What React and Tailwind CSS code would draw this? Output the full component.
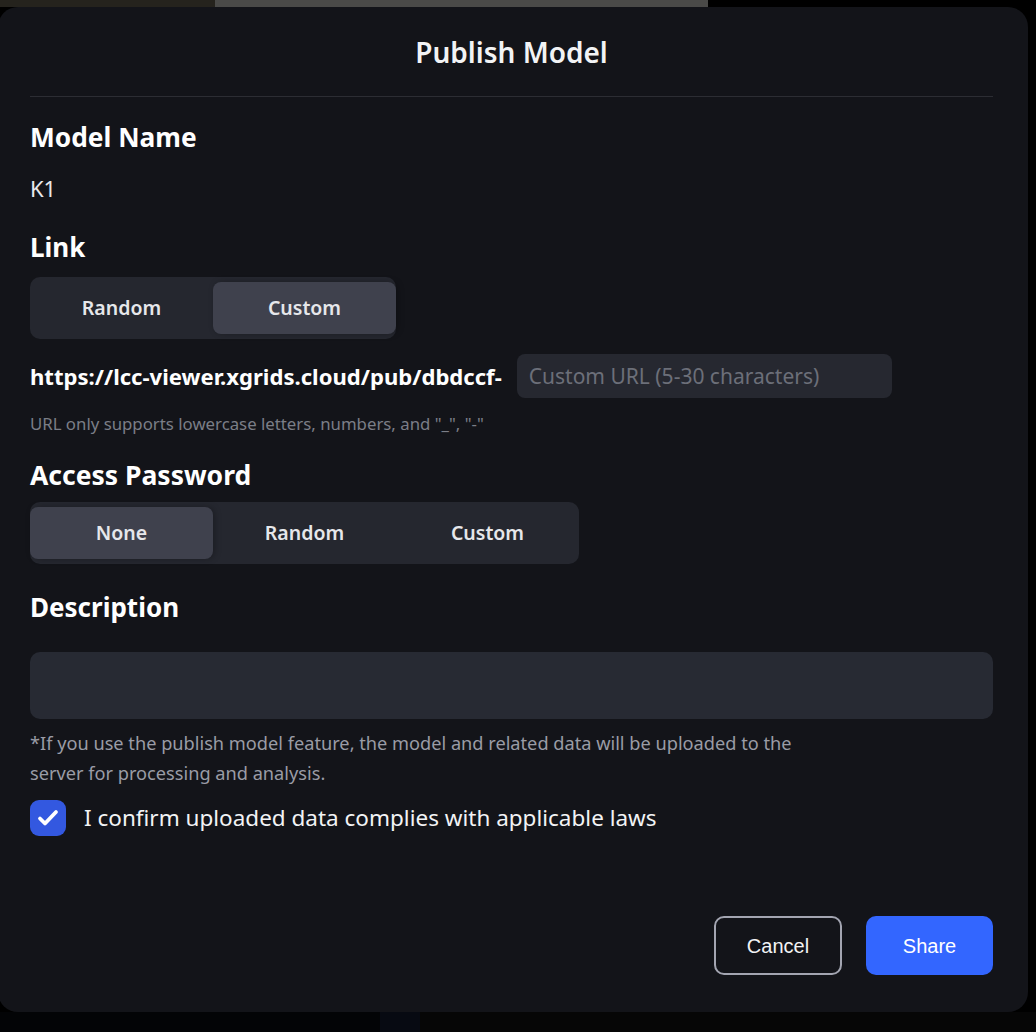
import { useState } from "react";

const font = { fontFamily: '"Noto Sans", "Open Sans", sans-serif' };

const Segmented = ({ options, value, onChange }) => (
  <div className="flex h-[62px] rounded-[10px] bg-[#25272f] py-[5px]">
    {options.map((opt) => (
      <button
        key={opt}
        onClick={() => onChange(opt)}
        className={`w-[183px] h-full rounded-[8px] text-[19.5px] font-semibold text-[#e6e7eb] ${
          value === opt ? "bg-[#3f414d] shadow-[2px_0_6px_rgba(0,0,0,0.25)]" : ""
        }`}
      >
        {opt}
      </button>
    ))}
  </div>
);

export default function App() {
  const [link, setLink] = useState("Custom");
  const [pwd, setPwd] = useState("None");
  const [agree, setAgree] = useState(true);

  return (
    <div className="w-[1036px] h-[1032px] bg-black overflow-hidden flex flex-col" style={font}>
      {/* backdrop strip */}
      <div className="h-[7px] flex shrink-0">
        <div className="w-[215px] bg-[#25231d]" />
        <div className="w-[493px] bg-[#4a4a48]" />
        <div className="flex-1 bg-black" />
      </div>

      <div className="w-[1030px] -ml-[2px] h-[1005px] bg-[#131419] rounded-[20px] pl-[32px] pr-[35px] flex flex-col">
        <h1 className="pt-[27px] h-[63px] text-center text-[28px] leading-[36px] font-semibold text-[#f2f3f5]">
          Publish Model
        </h1>
        <div className="mt-[26px] h-px bg-[#2c2d33]" />

        <h2 className="mt-[24px] text-[26.3px] leading-[32px] font-bold text-white">Model Name</h2>
        <p className="mt-[21px] text-[22px] leading-[28px] text-[#e8e9ec]">K1</p>

        <h2 className="mt-[29px] text-[26px] leading-[32px] font-bold text-white">Link</h2>
        <div className="mt-[14px] flex">
          <Segmented options={["Random", "Custom"]} value={link} onChange={setLink} />
        </div>

        <div className="mt-[15px] flex items-center gap-[15px]">
          <span className="text-[22.1px] leading-[28px] font-bold text-white">
            https://lcc-viewer.xgrids.cloud/pub/dbdccf-
          </span>
          <input
            placeholder="Custom URL (5-30 characters)"
            className="w-[375px] h-[44px] rounded-[8px] bg-[#262830] px-[12px] text-[21px] text-[#e8e9ec] placeholder:text-[#6c6f79] outline-none"
          />
        </div>
        <p className="mt-[16px] text-[16.8px] leading-[20px] text-[#7b7e87]">
          URL only supports lowercase letters, numbers, and "_", "-"
        </p>

        <h2 className="mt-[25px] text-[26.5px] leading-[32px] font-bold text-white">Access Password</h2>
        <div className="mt-[11px] flex">
          <Segmented options={["None", "Random", "Custom"]} value={pwd} onChange={setPwd} />
        </div>

        <h2 className="mt-[27px] text-[26px] leading-[32px] font-bold text-white">Description</h2>
        <textarea className="mt-[29px] h-[67px] w-full resize-none rounded-[10px] bg-[#272a33] px-3 py-2 text-[18px] text-white outline-none" />

        <p className="mt-[9px] text-[18.2px] leading-[30px] text-[#9a9ca6]">
          *If you use the publish model feature, the model and related data will be uploaded to the
          <br />
          server for processing and analysis.
        </p>

        <label className="mt-[12px] flex items-center gap-[18px] cursor-pointer">
          <span
            onClick={() => setAgree(!agree)}
            className={`w-[36px] h-[36px] rounded-[9px] flex items-center justify-center ${
              agree ? "bg-[#3358e0]" : "border-2 border-[#6c6f79]"
            }`}
          >
            {agree && (
              <svg width="24" height="24" viewBox="0 0 24 24" fill="none">
                <path d="M4 12.5l5 5L20 6" stroke="white" strokeWidth="3.8" strokeLinecap="round" strokeLinejoin="round" />
              </svg>
            )}
          </span>
          <span className="text-[22.5px] leading-[30px] text-[#f2f3f5]">
            I confirm uploaded data complies with applicable laws
          </span>
        </label>

        <div className="mt-[80px] flex justify-end gap-[24px]" style={{ fontFamily: '"Liberation Sans", Arial, sans-serif' }}>
          <button className="w-[128px] h-[59px] rounded-[10px] border-2 border-[#a3a5b1] text-[20px] text-[#f2f3f5]">
            Cancel
          </button>
          <button className="w-[127px] h-[59px] rounded-[10px] bg-[#3366ff] text-[20px] text-white">
            Share
          </button>
        </div>
      </div>

      <div className="flex-1 flex">
        <div className="w-[380px] bg-[#030406]" />
        <div className="w-[40px] bg-[#070a12]" />
        <div className="flex-1 bg-[#060606]" />
      </div>
    </div>
  );
}
